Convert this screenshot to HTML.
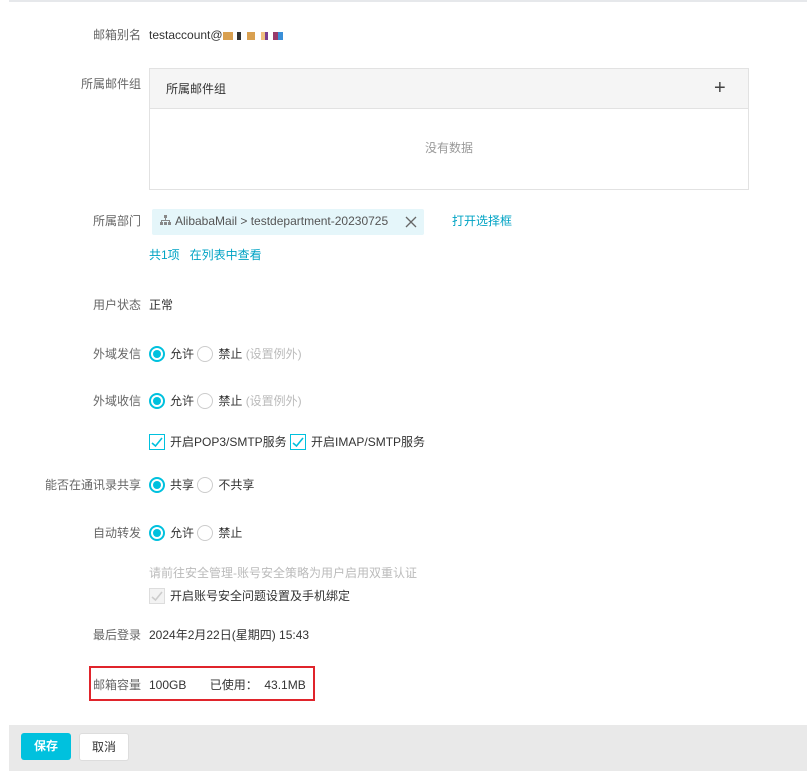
<!DOCTYPE html>
<html><head><meta charset="utf-8"><style>
body{margin:0;width:807px;height:771px;background:#fff;position:relative;overflow:hidden;font-family:"Liberation Sans","Noto Sans CJK SC",sans-serif;font-size:12px;color:#333}
.a{position:absolute;white-space:nowrap;line-height:16px}
.l{right:666px;color:#666;text-align:right}
.r{display:inline-block;width:16px;height:16px;border:1px solid #ccc;border-radius:50%;box-sizing:border-box;vertical-align:-4px;margin-right:5px;position:relative}
.r.on{border:2px solid #00c1de}
.r.on:after{content:"";position:absolute;left:2px;top:2px;width:8px;height:8px;border-radius:50%;background:#00c1de}
.cb{display:inline-block;width:16px;height:16px;border:1px solid #00c1de;box-sizing:border-box;vertical-align:-4px;margin-right:5px;position:relative}
.cb svg{position:absolute;left:1px;top:2px}
.g{color:#bbb}
.lk{color:#00a3c4}
</style></head><body>
<div style="position:absolute;left:9px;top:0;width:798px;height:2px;background:#e6e8eb"></div>

<div class="a l" style="top:27px">邮箱别名</div>
<div class="a" style="left:149px;top:27px;color:#333">testaccount@<span style="display:inline-block;width:60px;height:8px;vertical-align:-1px;background:linear-gradient(90deg,#d9a050 0 10px,#fff 10px 14px,#333 14px 18px,#fff 18px 24px,#d9a050 24px 32px,#fff 32px 38px,#f0c080 38px 42px,#7a3e8e 42px 45px,#fff 45px 50px,#9a3b6a 50px 55px,#3a8fd8 55px 60px)"></span></div>

<div class="a l" style="top:76px">所属邮件组</div>
<div style="position:absolute;left:149px;top:68px;width:598px;height:120px;border:1px solid #e2e2e2">
 <div style="height:39px;background:#f5f5f5;border-bottom:1px solid #e2e2e2;position:relative">
  <span class="a" style="left:16px;top:12px">所属邮件组</span>
  <span class="a" style="left:564px;top:8px;font-size:20px;line-height:22px;color:#444">+</span>
 </div>
 <div class="a" style="left:0;width:598px;text-align:center;top:71px;color:#999">没有数据</div>
</div>

<div class="a l" style="top:213px">所属部门</div>
<div style="position:absolute;left:152px;top:209px;width:272px;height:26px;background:#e5f6fa;border-radius:2px"></div>
<div class="a" style="left:160px;top:213px;color:#555"><svg width="11" height="11" viewBox="0 0 11 11" style="vertical-align:-1px;margin-right:4px"><rect x="4" y="0" width="3" height="3" fill="#888"/><rect x="5" y="3" width="1" height="2" fill="#888"/><rect x="1" y="5" width="9" height="1" fill="#888"/><rect x="1" y="5" width="1" height="2" fill="#888"/><rect x="9" y="5" width="1" height="2" fill="#888"/><rect x="0" y="7" width="3" height="3" fill="#888"/><rect x="8" y="7" width="3" height="3" fill="#888"/><rect x="4" y="7" width="3" height="3" fill="#888"/></svg>AlibabaMail &gt; testdepartment-20230725</div>
<svg style="position:absolute;left:405px;top:216px" width="12" height="12"><path d="M1 1L11 11M11 1L1 11" stroke="#666" stroke-width="1.3"/></svg>
<div class="a lk" style="left:452px;top:213px">打开选择框</div>
<div class="a lk" style="left:149px;top:247px">共1项 &nbsp; 在列表中查看</div>

<div class="a l" style="top:297px">用户状态</div>
<div class="a" style="left:149px;top:297px">正常</div>

<div class="a l" style="top:346px">外域发信</div>
<div class="a" style="left:149px;top:346px"><span class="r on"></span>允许 <span class="r"></span>禁止 <span class="g">(设置例外)</span></div>

<div class="a l" style="top:393px">外域收信</div>
<div class="a" style="left:149px;top:393px"><span class="r on"></span>允许 <span class="r"></span>禁止 <span class="g">(设置例外)</span></div>

<div class="a" style="left:149px;top:434px"><span class="cb"><svg width="12" height="11"><path d="M1 6L4.5 9L11 1" stroke="#00c1de" stroke-width="1.6" fill="none"/></svg></span>开启POP3/SMTP服务 <span class="cb"><svg width="12" height="11"><path d="M1 6L4.5 9L11 1" stroke="#00c1de" stroke-width="1.6" fill="none"/></svg></span>开启IMAP/SMTP服务</div>

<div class="a l" style="top:477px">能否在通讯录共享</div>
<div class="a" style="left:149px;top:477px"><span class="r on"></span>共享 <span class="r"></span>不共享</div>

<div class="a l" style="top:525px">自动转发</div>
<div class="a" style="left:149px;top:525px"><span class="r on"></span>允许 <span class="r"></span>禁止</div>

<div class="a g" style="left:149px;top:565px">请前往安全管理-账号安全策略为用户启用双重认证</div>
<div class="a" style="left:149px;top:588px"><span class="cb" style="border-color:#ddd;background:#f3f3f3"><svg width="12" height="11"><path d="M1 6L4.5 9L11 1" stroke="#ccc" stroke-width="1.6" fill="none"/></svg></span>开启账号安全问题设置及手机绑定</div>

<div class="a l" style="top:627px">最后登录</div>
<div class="a" style="left:149px;top:627px">2024年2月22日(星期四) 15:43</div>

<div style="position:absolute;left:89px;top:666px;width:222px;height:31px;border:2px solid #e0242b"></div>
<div class="a l" style="top:677px">邮箱容量</div>
<div class="a" style="left:149px;top:677px">100GB &nbsp; &nbsp; &nbsp; 已使用： &nbsp;43.1MB</div>

<div style="position:absolute;left:9px;top:725px;width:798px;height:46px;background:#e9e9e9"></div>
<div style="position:absolute;left:21px;top:733px;width:50px;height:27px;background:#00c1de;border-radius:3px;color:#fff;font-weight:bold;text-align:center;line-height:27px">保存</div>
<div style="position:absolute;left:79px;top:733px;width:48px;height:26px;background:#fff;border:1px solid #ddd;border-radius:3px;text-align:center;line-height:26px">取消</div>
</body></html>
